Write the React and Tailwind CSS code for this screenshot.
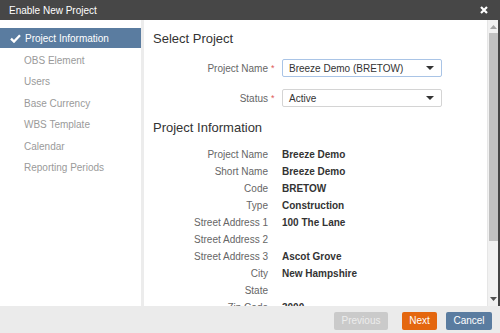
const steps = [
  "Project Information",
  "OBS Element",
  "Users",
  "Base Currency",
  "WBS Template",
  "Calendar",
  "Reporting Periods",
];

const info = [
  ["Project Name", "Breeze Demo"],
  ["Short Name", "Breeze Demo"],
  ["Code", "BRETOW"],
  ["Type", "Construction"],
  ["Street Address 1", "100 The Lane"],
  ["Street Address 2", ""],
  ["Street Address 3", "Ascot Grove"],
  ["City", "New Hampshire"],
  ["State", ""],
  ["Zip Code", "3000"],
];

function Caret() {
  return (
    <svg width="8" height="4" viewBox="0 0 8 4" className="shrink-0">
      <path d="M0 0h8L4 4z" fill="#333" />
    </svg>
  );
}

function SelectRow({ label, value, focused }) {
  return (
    <div className="grid grid-cols-[115px_14px_160px] items-center h-[18px]">
      <span className="text-right text-[#666]">{label}</span>
      <span className="pl-[3px] text-[#e0585b] text-[9px] leading-none">*</span>
      <div
        className={`h-[18px] flex items-center justify-between pl-[6px] pr-[7px] rounded-[2px] border bg-white text-[#333] ${
          focused ? "border-[#a9c4e6]" : "border-[#d4d4d4]"
        }`}
      >
        <span>{value}</span>
        <Caret />
      </div>
    </div>
  );
}

export default function App() {
  return (
    <div className="w-[500px] h-[333px] flex flex-col bg-white font-['Liberation_Sans',Arial,sans-serif] text-[10px] overflow-hidden">
      {/* title bar */}
      <div className="h-[20px] shrink-0 bg-[#474747] flex items-center justify-between pl-[9px] pr-[12px] text-white">
        <span>Enable New Project</span>
        <svg width="8" height="8" viewBox="0 0 8 8">
          <path d="M1 1l6 6M7 1l-6 6" stroke="#fff" strokeWidth="2.2" />
        </svg>
      </div>

      <div className="h-[286px] shrink-0 flex">
        {/* wizard steps */}
        <div className="w-[144px] shrink-0 border-r-[3px] border-[#ececec] pt-[8px]">
          {steps.map((s, i) =>
            i === 0 ? (
              <div key={s} className="h-[20px] mb-[1.5px] flex items-center bg-[#5a7ca0] text-white">
                <svg width="11" height="9" viewBox="0 0 11 9" className="ml-[10px] mr-[4px]">
                  <path d="M1 4.6l3 3L10 1.2" stroke="#fff" strokeWidth="2.3" fill="none" />
                </svg>
                <span>{s}</span>
              </div>
            ) : (
              <div key={s} className="h-[21.5px] flex items-center pl-[24px] text-[#9a9a9a]">
                {s}
              </div>
            )
          )}
        </div>

        {/* content */}
        <div className="flex-1 overflow-hidden pl-[9px] pt-[11px]">
          <div className="text-[13px] leading-[16px] text-[#333]">Select Project</div>
          <div className="mt-[12px] flex flex-col gap-[12px]">
            <SelectRow label="Project Name" value="Breeze Demo (BRETOW)" focused />
            <SelectRow label="Status" value="Active" />
          </div>
          <div className="mt-[13px] text-[13px] leading-[16px] text-[#333]">Project Information</div>
          <div className="mt-[10px]">
            {info.map(([k, v]) => (
              <div key={k} className="grid grid-cols-[115px_14px_1fr] items-center h-[17px]">
                <span className="text-right text-[#666]">{k}</span>
                <span />
                <span className="font-bold text-[#333]">{v}</span>
              </div>
            ))}
          </div>
        </div>

        {/* scrollbar */}
        <div className="w-[11px] shrink-0 bg-[#f1f1f1] border-l border-[#e6e6e6] flex flex-col items-center">
          <svg width="7" height="4" viewBox="0 0 7 4" className="mt-[5px]">
            <path d="M0 4h7L3.5 0z" fill="#a3a3a3" />
          </svg>
          <div className="mt-[4px] w-[9px] h-[208px] bg-[#c1c1c1]" />
          <div className="flex-1" />
          <svg width="7" height="4" viewBox="0 0 7 4" className="mb-[5px]">
            <path d="M0 0h7L3.5 4z" fill="#505050" />
          </svg>
        </div>
        <div className="w-[2px] shrink-0 bg-[#444]" />
      </div>

      {/* footer */}
      <div className="flex-1 bg-[#ebebeb] flex items-start justify-end pt-[6px] pr-[8px]">
        <button className="w-[54px] h-[18px] leading-[18px] rounded-[2px] bg-[#cacaca] text-[#ededed]">Previous</button>
        <button className="ml-[14px] w-[35px] h-[18px] leading-[18px] rounded-[2px] bg-[#e4670f] text-white">Next</button>
        <button className="ml-[9px] w-[46px] h-[18px] leading-[18px] rounded-[2px] bg-[#5a7ca0] text-white">Cancel</button>
      </div>
    </div>
  );
}
